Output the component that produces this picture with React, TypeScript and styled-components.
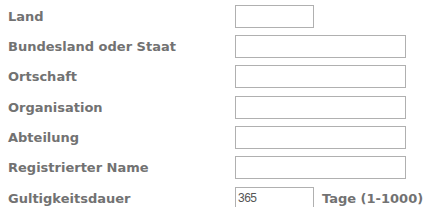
import React from "react";
import styled, { createGlobalStyle } from "styled-components";

const GlobalStyle = createGlobalStyle`
  html, body {
    margin: 0;
    padding: 0;
    background: #fff;
  }
`;

const rows = [
  { label: "Land", short: true },
  { label: "Bundesland oder Staat" },
  { label: "Ortschaft" },
  { label: "Organisation" },
  { label: "Abteilung" },
  { label: "Registrierter Name" },
];

const App = () => {
  return (
    <>
      <GlobalStyle />
      <Form>
        {rows.map((row) => (
          <Row key={row.label}>
            <Label>{row.label}</Label>
            <Field $short={row.short} />
          </Row>
        ))}
        {/* Validity row with unit text after the input */}
        <Row>
          <Label>Gultigkeitsdauer</Label>
          <FieldGroup>
            <Field $short defaultValue="365" />
            <Unit>Tage (1-1000)</Unit>
          </FieldGroup>
        </Row>
      </Form>
    </>
  );
};

const Form = styled.div`
  display: grid;
  grid-auto-rows: 30.33px;
  padding: 1px 0 0 8px;
  width: 423px;
  height: 207px;
  box-sizing: border-box;
  overflow: hidden;
  font-family: "DejaVu Sans", Verdana, sans-serif;
  font-size: 13px;
  font-weight: bold;
  color: #727272;
`;

const Row = styled.div`
  display: grid;
  grid-template-columns: 227px 1fr;
  align-items: center;
`;

const Label = styled.span`
  white-space: nowrap;
`;

const FieldGroup = styled.div`
  display: flex;
  align-items: center;
  gap: 8px;
`;

const Field = styled.input<{ $short?: boolean }>`
  box-sizing: border-box;
  width: ${(p) => (p.$short ? "79px" : "171px")};
  height: 23px;
  margin: 0;
  padding: 0 2px;
  border: 1px solid #b0b0b0;
  border-radius: 0;
  background: #fff;
  font-family: "Liberation Sans", Arial, sans-serif;
  font-size: 12px;
  letter-spacing: -0.5px;
  color: #555;
  outline: none;
`;

const Unit = styled.span`
  white-space: nowrap;
`;

export default App;
